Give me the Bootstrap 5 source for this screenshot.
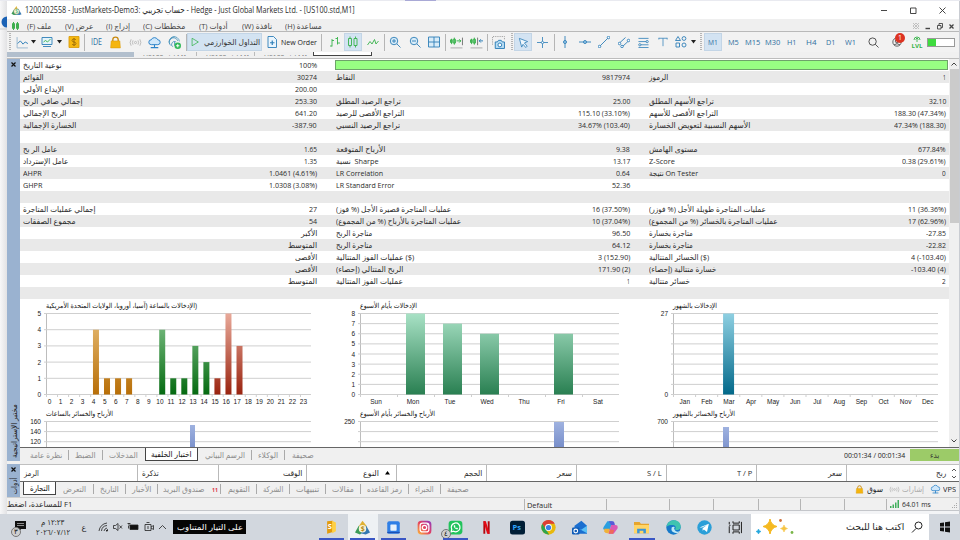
<!DOCTYPE html>
<html lang="ar">
<head>
  <meta charset="UTF-8">
  <meta name="viewport" content="width=device-width, initial-scale=1.0">
  <title>JustMarkets - Strategy Tester</title>
  <link href="https://cdn.jsdelivr.net/npm/bootstrap@5.3.3/dist/css/bootstrap.min.css" rel="stylesheet">
  <style>
    body {
      width: 960px;
      height: 540px;
      background: #f3f4f6;
      font-family: "Open Sans", "DejaVu Sans", sans-serif;
      font-size: 8px;
      line-height: 12px;
      color: #2b2b2b;
    }
    svg { display: block; flex: none; }
    .fit { display: inline-block; flex: none; white-space: nowrap; }
    .fit > span { display: inline-block; transform-origin: 0 50%; white-space: pre; }
    .backdrop { height: 1px; background: #e9eaf0; }
    .backdrop div { width: 31px; height: 1px; margin-left: 405px; background: #a9a9d6; }
    .desk { height: 513px; }
    .behind { width: 7px; background: linear-gradient(90deg, #f7f7f8, #e2e2e4); overflow: hidden; }
    .window { width: 952px; height: 510px; background: #f0f0f0; border-bottom: 1px solid #c4c6ca; }
    .window > * { flex: none; }
    .edge { width: 1px; background: #c9ccd2; }
    .titlebar { height: 18px; background: #fff; padding-left: 4px; font-size: 9px; }
    .titlebar .fit { margin-left: 3px; }
    .menubar { height: 12px; background: #efefef; color: #444; padding-top: 1px; }
    .toolbar { height: 21px; background: #f2f2f2; border-top: 1px solid #b9b9b9; }
    .tool { height: 18px; color: #2f6f9f; }
    .tool.on { background: #d3e3f2; border: 1px solid #c3d5e6; }
    .vline { width: 1px; height: 17px; background: #b5b5b5; }
    .grip { width: 2px; height: 18px; background: repeating-linear-gradient(#b5b5b5 0 1px, transparent 1px 2px); }
    .alert-dot { top: 0; right: 3px; width: 10px; height: 10px; background: #dd3322; color: #fff; font-size: 7px; line-height: 10px; }
    .level { width: 28px; height: 9px; border: 1px solid #999; background: #fff; }
    .level div { width: 8px; height: 7px; background: #3fdc3f; }
    .strip { height: 7px; font-size: 7px; color: #777; border-bottom: 1px solid #bdbdbd; }
    .strip .blue { width: 127px; height: 5px; background: #b2bfcd; }
    .strip .cut { width: 59px; height: 4px; overflow: hidden; padding-left: 9px; border-left: 1px solid #bbb; }
    .strip .cut .fit { margin-top: -6px; }
    .strip .cut.front { background: #fff; color: #333; border: 1px solid #444; border-top: 0; }
    .side { width: 13px; background: #9ab2d0; color: #222; }
    .sheet { width: 929px; background: #fff; overflow: hidden; }
    .stat { height: 12px; padding-right: 3px; padding-left: 3px; }
    .stat:nth-child(even) { background: #e9e9e9; }
    .pair { width: 294px; }
    .pair + .pair { margin-left: 18.5px; }
    .pair.last { width: 297px; margin-left: 19.5px; }
    .quality { width: 613px; height: 10px; background: #98ff83; border: 1px solid #6ea36a; margin-left: 18px; }
    .scroll { width: 10px; background: #f0f0f0; }
    .thumb { width: 9px; height: 154px; background: #cbcbcb; }
    .tabs { height: 15px; border-top: 1px solid #666; background: #f0f0f0; color: #8c8c8c; }
    .tabs.tester { height: 14px; }
    .tabs .tab { height: 10px; border-right: 1px solid #aaa; }
    .tabs .tab.open { height: 13px; background: #fff; color: #111; border: 1px solid #444; border-top: 0; align-self: flex-start; }
    .tabs .tab.plain { border-right-color: transparent; }
    .start-btn { width: 49px; height: 12px; background: #9ccb68; color: #333; font-size: 8px; }
    .cols { height: 17px; background: #fff; border-top: 1px solid #c0c0c0; }
    .cols .cell { border-right: 1px solid #b9b9b9; padding: 0 4px; height: 16px; }
    .status { height: 13px; border-top: 1px solid #cfcfcf; }
    .status .cell { height: 11px; border-left: 1px solid #b5b5b5; }
    .taskbar { height: 26px; background: #d2d7de; }
    .app { height: 26px; width: 31px; }
    .app.live::after { content: ""; position: absolute; bottom: 0; left: 3px; right: 3px; height: 2px; background: #3a56c4; }
    .app.sel::before { content: ""; position: absolute; inset: 0 0 0 1px; background: #eef1f4; }
    .app svg { position: relative; }
    .unread { left: 1px; bottom: 1px; width: 10px; height: 10px; border: 1px solid #777; background: #cfcfcf; font-size: 7px; line-height: 8px; color: #111; }
    .tip { width: 73px; height: 14px; background: #050505; color: #fff; }
    .search { width: 178px; height: 26px; background: #fff; }
  </style>
</head>
<body class="overflow-hidden">
  <div class="backdrop"><div></div></div>
  <div class="desk d-flex">
    <div class="behind">
      <svg width="7" height="513"><circle cx="7" cy="21" r="5.5" fill="#1b62b5"/><path d="M0 28h7" stroke="#ccc"/></svg>
    </div>

    <div class="window d-flex flex-column">
      <div class="titlebar d-flex align-items-center">
        <svg width="11" height="11" viewBox="0 0 24 24"><path d="M12 2 7 9l10 6z" fill="#e3b83f"/><path d="M7 9 1 19l5 3 7-1z" fill="#3c9a58"/><path d="M16 8l7 12-4 2-9-1z" fill="#3f7fb5"/><circle cx="12" cy="14" r="6" fill="#f7f3dd" stroke="#7d8f55"/><text x="9" y="18" font-size="11" fill="#4b7">$</text></svg>
        <span class="fit" data-w="330">1200202558 - JustMarkets-Demo3: حساب تجريبي - Hedge - Just Global Markets Ltd. - [US100.std,M1]</span>
        <svg class="ms-auto me-1" width="74" height="12" fill="none" stroke="#333" stroke-width=".9"><path d="M0 6.500h6M29.500 4h5.500v5.500h-5.500zM58.500 3.500l6 6m0-6l-6 6"/></svg>
      </div>

      <div class="menubar d-flex align-items-center" id="menu"></div>
      <div class="toolbar d-flex align-items-center" id="tools"></div>

      <div class="strip d-flex align-items-start">
        <div class="blue"></div>
        <div class="cut border-0" style="width:62px"><span class="fit" data-w="44">US100.std,M1</span></div>
        <div class="cut" style="width:58px"><span class="fit" data-w="44">US100.std,M1</span></div>
        <div class="cut"><span class="fit" data-w="44">US100.std,M1</span></div>
        <div class="cut front"><span class="fit" data-w="44">US100.std,M1</span></div>
      </div>

      <div class="d-flex" style="height:402px">
        <div class="side d-flex flex-column justify-content-between align-items-center">
          <svg width="13" height="12" stroke="#111" stroke-width="1.2"><path d="M4.500 3.500l4 4m0-4l-4 4"/></svg>
          <svg width="13" height="60"><text transform="translate(9.500 57) rotate(-90)" textLength="54" lengthAdjust="spacingAndGlyphs" font-size="8" fill="#222">مختبر الإستراتيجية</text></svg>
        </div>
        <div class="flex-grow-1">
          <div class="d-flex" style="height:388px">
            <div class="sheet">
              <div id="stats"></div>
              <div class="d-flex" id="charts"></div>
            </div>
            <div class="scroll d-flex flex-column align-items-center">
              <svg width="10" height="10" fill="none" stroke="#444"><path d="M2.500 6.500l2.500-2.500 2.500 2.500"/></svg>
              <div class="thumb"></div>
              <svg class="mt-auto" width="10" height="11" fill="none" stroke="#444"><path d="M2.500 3.500l2.500 2.500 2.500-2.500"/></svg>
            </div>
          </div>
          <div class="tabs tester d-flex align-items-center">
            <div class="d-flex align-items-center align-self-stretch" id="testerTabs"></div>
            <span class="fit ms-auto" data-w="61" style="color:#222;margin-right:5px">00:01:34 / 00:01:34</span>
            <div class="start-btn d-flex align-items-center justify-content-center"><span class="fit" data-w="9">بدء</span></div>
          </div>
        </div>
      </div>

      <div class="d-flex" style="height:33px;margin-top:3px">
        <div class="side d-flex flex-column align-items-center">
          <svg width="13" height="12" stroke="#111" stroke-width="1.2"><path d="M4.500 3.500l4 4m0-4l-4 4"/></svg>
          <svg width="13" height="20"><text transform="translate(9.500 18.500) rotate(-90)" textLength="17" lengthAdjust="spacingAndGlyphs" font-size="8" fill="#222">أدوات</text></svg>
        </div>
        <div class="flex-grow-1">
          <div class="cols d-flex align-items-center" id="cols"></div>
          <div class="tabs d-flex align-items-center">
            <div class="d-flex align-items-center align-self-stretch" id="toolTabs"></div>
            <div class="ms-auto d-flex align-items-center text-dark" style="padding-right:3px">
              <svg width="9" height="9" viewBox="0 0 24 24"><use href="#bag"/></svg>
              <span class="fit" data-w="16" style="margin:0 6px 0 3px">سوق</span>
              <svg width="11" height="9" viewBox="0 0 24 20"><use href="#radio"/></svg>
              <span class="fit" data-w="22" style="margin:0 6px 0 2px;color:#aaa">إشارات</span>
              <svg width="11" height="10" viewBox="0 0 24 24"><use href="#cloud"/></svg>
              <span class="fit" data-w="13" style="margin-left:2px">VPS</span>
            </div>
          </div>
        </div>
      </div>

      <div class="status d-flex align-items-center">
        <span class="fit" data-w="65" style="width:517px">للمساعدة، اضغط F1</span>
        <div class="cell" style="width:82px;padding-left:2px"><span class="fit" data-w="25">Default</span></div>
        <div class="cell" style="width:63px"></div>
        <div class="cell" style="width:44px"></div>
        <div class="cell" style="width:45px"></div>
        <div class="cell" style="width:42px"></div>
        <div class="cell" style="width:44px"></div>
        <div class="cell" style="width:42px"></div>
        <div class="cell d-flex align-items-center flex-grow-1" style="padding-left:3px">
          <svg width="10" height="8" fill="#3fae5a"><path d="M0 6h1.500v2H0zM2.500 4.500H4V8H2.500zM5 2.500h1.500V8H5zM7.500 0H9v8H7.500z"/></svg>
          <span class="fit" data-w="29" style="margin-left:2px">64.01 ms</span>
          <svg class="ms-auto align-self-end" width="8" height="8" fill="#aaa"><path d="M5 1h1v1H5zM5 3h1v1H5zM3 3h1v1H3zM5 5h1v1H5zM3 5h1v1H3zM1 5h1v1H1z"/></svg>
        </div>
      </div>
    </div>
    <div class="edge"></div>
  </div>

  <div class="taskbar d-flex align-items-center">
    <div class="position-relative" style="width:35px;padding-left:13px">
      <svg width="14" height="15" viewBox="0 0 14 15"><path d="M2 1h11v8H8l-2 3V9H2z" fill="#111"/><path d="M4 3.500h7M4 5.500h7" stroke="#aaa" stroke-width=".8"/></svg>
      <span class="unread position-absolute rounded-circle text-center" style="left:11px;bottom:-2px">٣</span>
    </div>
    <div class="d-flex flex-column align-items-center" style="width:35px;line-height:10px">
      <span class="fit" data-w="23" dir="rtl">١٢:٢٣ م</span>
      <span class="fit" data-w="34">٢٠٢٦/٠٧/١٢</span>
    </div>
    <span class="text-center" style="width:28px">ع</span>
    <svg width="70" height="12" fill="none" stroke="#222" stroke-width=".8">
      <path d="M1 10a9 9 0 0 1 8-8M3.500 10a6 6 0 0 1 5.500-5.500M6 10a4 4 0 0 1 3-3"/><path d="M8 10l1.500-1.500V10z" fill="#222"/>
      <path d="M15.500 4.500h2l2.500-2v7l-2.500-2h-2zM21.500 4.500l2.500 3m0-3l-2.500 3"/>
      <path d="M32 4h8v4.500h-8z" fill="#111"/><path d="M30.500 5v2.500M29.500 2.500h3M31 2v3"/>
      <path d="M47 3.500h6v6h-6zM53 6l2.500-1.500v4L53 7M48.500 1.500h3M50 5v3"/>
      <path d="M61 8l3.500-3.500L68 8"/>
    </svg>
    <div style="width:5px"></div>
    <div class="tip d-flex align-items-center justify-content-center"><span class="fit" data-w="66">على التيار المتناوب</span></div>
    <div style="width:69.500px"></div>
    <div class="d-flex" id="apps"></div>
    <div class="search d-flex align-items-center">
      <svg width="46" height="20" style="margin-left:3px"><path d="M16 2q1 6 7 7.500-6 1.500-7 7.500-1-6-7-7.500 6-1.500 7-7.500z" fill="#f5b921" stroke="#f5b921"/><path d="M30 8q.5 3 3.500 3.500-3 .5-3.500 3.500-.5-3-3.500-3.500 3-.5 3.500-3.500z" fill="#f6c443" stroke="#f6c443" stroke-width=".6"/><path d="M4.500 12q.4 2 2.500 2.500-2.100.5-2.500 2.500-.4-2-2.500-2.500 2.100-.5 2.500-2.500z" fill="#25a7dd" stroke="#25a7dd" stroke-width=".6"/><circle cx="26.500" cy="3.500" r="1.400" fill="#d0703a"/><circle cx="38" cy="15.500" r="1.400" fill="#7ab648"/></svg>
      <span class="fit" data-w="58" style="margin-left:46px;font-size:9px">اكتب هنا للبحث</span>
      <svg width="13" height="13" style="margin-left:7px" fill="none" stroke="#222"><circle cx="7.500" cy="4.500" r="3.500"/><path d="M5 7.500l-4 4"/></svg>
    </div>
    <svg width="31" height="12" fill="#111"><path d="M11 2l4-.6V5.500h-4zM16 1.200l5-.7v5h-5zM11 6.500h4v4l-4-.6zM16 6.500h5v5l-5-.7z"/></svg>
  </div>

  <svg width="0" height="0" class="position-absolute">
    <symbol id="bag" viewBox="0 0 24 24"><path d="M7 10V7a5 5 0 0 1 10 0v3" fill="none" stroke="#c98a10" stroke-width="2.500"/><path d="M4 9h16l1 13H3z" fill="#f5b50e" stroke="#d79a0b"/></symbol>
    <symbol id="radio" viewBox="0 0 24 20"><g fill="none" stroke="#b5b5b5" stroke-width="1.600"><circle cx="12" cy="10" r="2"/><path d="M7.500 6q-2.500 4 0 8M16.500 6q2.500 4 0 8M4 4q-4 6 0 12M20 4q4 6 0 12"/></g></symbol>
    <symbol id="cloud" viewBox="0 0 24 24"><path d="M6 16a4.500 4.500 0 0 1 0-9 6.500 6.500 0 0 1 12 0 4.500 4.500 0 0 1 0 9z" fill="#cfe7fa" stroke="#2a82c9" stroke-width="1.800"/><path d="M12 16v6M5 21.500h14" stroke="#2a82c9" stroke-width="2"/></symbol>
  </svg>

  <script>
    const $ = id => document.getElementById(id);
    const fit = (text, w, dir = 'rtl') => `<span class="fit" data-w="${w}" dir="${dir}">${text}</span>`;

    // menu: label, text width, left gap
    const menu = [['ملف (F)', 24, 6], ['عرض (V)', 28, 14], ['إدراج (I)', 24, 13], ['مخططات (C)', 42, 13],
      ['أدوات (T)', 29, 14], ['نافذة (W)', 30, 14], ['مساعدة (H)', 37, 13]];
    $('menu').innerHTML = `
      <svg width="12" height="10" style="margin-left:2px" fill="none" stroke="#3faf4f"><path d="M3.500 2.500h2v5h-2zM7.500 2.500h2v5h-2zM4.500 1v8M8.500 1v8"/></svg>` +
      menu.map(m => `<span style="margin-left:${m[2]}px;line-height:12px">${fit(m[0], m[1])}</span>`).join('') + `
      <svg class="ms-auto" width="48" height="12" fill="none" stroke="#444" stroke-width=".9" style="margin-right:1px">
        <path d="M3 3l6 6m0-6l-6 6M3 6l3-3 3 3-3 3z" stroke="#bbb"/><path d="M15.500 8.500h4.500" stroke-width="1.400"/>
        <path d="M27.500 5.500h3.500v3.500h-3.500zM29 5.500v-2h3.500V7.500H31"/><path d="M39.500 4.500l4 4m0-4l-4 4" stroke-width="1.300"/></svg>`;

    const B = '#2f7fb8', G = '#35b24a';
    const icons = {
      line: `<path d="M2 2v20h20" stroke="#9bb8d0"/><path d="M3 14l5-5 5 6 4-4 5 3" stroke="${B}"/>`,
      screen: `<path d="M2 3h20v14H2z" fill="#e3f3fa" stroke="${B}"/><path d="M5 12l4-3 4 3 6-6" stroke="${G}"/><path d="M4 21h16" stroke="${B}"/>`,
      dollar: `<path d="M2 1h20v22H2z" fill="#f6b80f" stroke="#d99d10"/><path d="M16 8c-1-3-8-3-8 1s8 2 8 6-7 4-8 1M12 4v16" stroke="#8a5d08" stroke-width="1.500"/>`,
      finger: `<g stroke="#4b95bd" stroke-width="1.500"><path d="M3 15a9.500 9.500 0 1 1 18-5M6 18a8 8 0 1 1 12-9M9 20a5 5 0 1 1 6-9M12 11v7M2 10q2-8 10-9"/></g><circle cx="18" cy="18" r="6" fill="#33b95b" stroke="none"/><path d="M18 15v6M15 18h6" stroke="#fff"/>`,
      play: `<path d="M5 3l15 9-15 9z" stroke="${G}"/>`,
      order: `<path d="M4 1h11l6 6v16H4z" fill="#eaf5fd" stroke="${B}"/><path d="M12.500 9v9M8 13.500h9" stroke="${B}" stroke-width="2.400"/>`,
      bars: `<path d="M6 6v15M6 20H2M6 9h4M17 2v15M17 5h-4M17 14h5" stroke="${G}"/>`,
      candles: `<path d="M3 5h6v14H3zM14 5h6v14h-6zM6 1v4M6 19v4M17 1v4M17 19v4" stroke="${G}"/>`,
      wave: `<path d="M1 18l5-7 4 5 5-9 3 9 5-6" stroke="${G}"/>`,
      zoomin: `<circle cx="10" cy="10" r="7.500" fill="#d9ecf8" stroke="${B}"/><path d="M16 16l7 7M6 10h8M10 6v8" stroke="${B}"/>`,
      zoomout: `<circle cx="10" cy="10" r="7.500" fill="#d9ecf8" stroke="${B}"/><path d="M16 16l7 7M6 10h8" stroke="${B}"/>`,
      tiles: `<path d="M1 2h22v20H1zM12 2v20M1 12h22" fill="#d9ecf8" stroke="${B}"/>`,
      shiftr: `<path d="M3 5v10M8 3v13M6 6h4v7H6zM1 7h3v5H1z" stroke="${G}"/><path d="M12 9h8m-3-3l3 3-3 3" stroke="${G}"/><path d="M23 3v14" stroke="#777"/><path d="M1 22h22" stroke="#aaa"/>`,
      shiftl: `<path d="M3 5v10M8 3v13M6 6h4v7H6zM1 7h3v5H1z" stroke="${G}"/><path d="M14 3v14" stroke="#777"/><path d="M24 9h-7m3-3l-3 3 3 3" stroke="${B}"/><path d="M1 22h22" stroke="#aaa"/>`,
      camera: `<path d="M1 16V1h22v6" stroke="#999" stroke-dasharray="2 2"/><path d="M6 11h4l2-3h5l2 3h4v12H6z" fill="#b9def5" stroke="${B}"/><circle cx="14.500" cy="16.500" r="3.500" fill="#fff" stroke="${B}"/>`,
      cursor: `<path d="M3 3l18 7-7 3 6 7-3 3-6-7-3 6z" stroke="${B}" fill="#eef6fc"/>`,
      cross: `<path d="M12 0v24M0 12h24" stroke="${B}"/><circle cx="12" cy="12" r="2.500" fill="#fff" stroke="${B}"/>`,
      vert: `<path d="M12 0v24" stroke="${B}"/><circle cx="12" cy="12" r="3" fill="#9cc9e8" stroke="${B}"/>`,
      horz: `<path d="M0 12h24" stroke="${B}"/><circle cx="12" cy="12" r="3" fill="#9cc9e8" stroke="${B}"/>`,
      trend: `<path d="M4 20L20 4" stroke="${B}"/><circle cx="3" cy="21" r="2.500" fill="#fff" stroke="${B}"/><circle cx="21" cy="3" r="2.500" fill="#fff" stroke="${B}"/>`,
      channel: `<path d="M3 14L15 3M8 22L22 9" stroke="${B}"/><circle cx="3" cy="15" r="2.500" fill="#fff" stroke="${B}"/><circle cx="8" cy="21" r="2.500" fill="#fff" stroke="${B}"/><circle cx="21" cy="9" r="2.500" fill="#fff" stroke="${B}"/>`,
      fibo: `<path d="M1 3h22M1 10h17M6 17h17M1 23h22" stroke="${B}"/><circle cx="20" cy="10" r="2.500" stroke="${B}"/><circle cx="4" cy="17" r="2.500" stroke="${B}"/>`,
      tee: `<path d="M2 3h20M12 3v19M2 2v4M22 2v4" stroke="${B}"/>`,
      shapes: `<path d="M6 1l5 8H1zM2 14h7v8H2z" stroke="${B}"/><circle cx="18" cy="5" r="3.800" stroke="${B}"/><circle cx="18" cy="18" r="4" stroke="${B}"/>`,
      find: `<circle cx="10" cy="10" r="8" stroke="#333"/><path d="M16 16l7 7" stroke="#333"/>`,
      user: `<circle cx="12" cy="12" r="10" stroke="#333"/><circle cx="12" cy="10" r="4" stroke="#333"/><path d="M5 19q7-6 14 0" stroke="#333"/>`,
      lvl: `<path d="M6 8a6 6 0 0 1 12 0M12 12V4m-3 3l3-3 3 3" stroke="${G}"/><text x="1" y="23" font-size="11" font-weight="bold" fill="${G}" textLength="22" lengthAdjust="spacingAndGlyphs" stroke="none">LVL</text>`
    };
    const svg = (name, size = 12) => `<svg width="${size}" height="${size}" viewBox="0 0 24 24" fill="none" stroke-width="1.800">${icons[name]}</svg>`;
    const use = name => `<svg width="13" height="13" viewBox="0 0 24 24"><use href="#${name}"/></svg>`;
    const caret = '<svg width="5" height="4" fill="#222"><path d="M0 0h5L2.500 3.500z"/></svg>';
    const sep = '<div class="vline"></div>', grip = '<div class="grip"></div>';

    // toolbar: content, slot width, pressed
    const tools = [[grip, 5], ['', 3], [svg('line', 13), 14], [caret, 8], ['', 2], [svg('screen'), 16], [caret, 8],
      [svg('dollar'), 21], [sep, 1], [`<span style="font-size:9px">${fit('IDE', 11)}</span>`, 22], [use('bag'), 17], [use('radio'), 22],
      [use('cloud'), 17], [svg('finger', 13), 22], [sep, 2],
      [svg('play', 10) + '<span style="margin-left:4px;color:#333">' + fit('التداول الخوارزمي', 56) + '</span>', 75, 1],
      [svg('order', 12), 19], ['<span style="color:#222">' + fit('New Order', 36) + '</span>', 36], [sep, 9],
      [svg('bars'), 18], [svg('candles'), 18, 1], [svg('wave'), 21], [sep, 2], [svg('zoomin'), 20], [svg('zoomout'), 19],
      [svg('tiles'), 20], [sep, 3], [svg('shiftr', 13), 19], [svg('shiftl', 13), 20], [sep, 2], [svg('camera', 13), 21], [grip, 5],
      [svg('cursor', 11), 18, 1], [svg('cross', 11), 21], [sep, 2], [svg('vert'), 20], [svg('horz'), 19], [svg('trend'), 20],
      [svg('channel'), 19], [svg('fibo', 11), 20], [svg('tee', 10), 19], [svg('shapes'), 18], [caret, 7], [grip, 7],
      [fit('M1', 10), 18, 1], ['', 1], [fit('M5', 11), 20], [fit('M15', 15), 19], [fit('M30', 15), 20], [fit('H1', 9), 19],
      [fit('H4', 10), 20], [fit('D1', 9), 19], [fit('W1', 11), 20], [svg('find', 11), 26],
      [svg('user', 10) + '<span class="alert-dot position-absolute rounded-circle text-center">1</span>', 22],
      [svg('lvl', 12), 18], ['<div class="level"><div></div></div>', 30]];
    $('tools').innerHTML = tools.map(([html, w, on]) =>
      `<div class="tool ${on ? 'on' : ''} d-flex align-items-center justify-content-center position-relative flex-shrink-0" style="width:${w}px">${html}</div>`).join('');

    // report rows: label, width, value, width for each of three columns
    const stats = [
      ['نوعية التاريخ', 39, '100%', 18],
      ['القوائم', 21, '30274', 20, 'النقاط', 19, '9817974', 28, 'الرموز', 19, '1', 3],
      ['الإيداع الأولي', 41, '200.00', 22],
      ['إجمالي صافي الربح', 60, '253.30', 22, 'تراجع الرصيد المطلق', 65, '25.00', 17, 'تراجع الأسهم المطلق', 65, '32.10', 17],
      ['الربح الإجمالي', 43, '641.20', 22, 'التراجع الأقصى للرصيد', 68, '115.10 (33.10%)', 52, 'التراجع الأقصى للأسهم', 69, '188.30 (47.34%)', 52],
      ['الخسارة الإجمالية', 53, '-387.90', 25, 'تراجع الرصيد النسبي', 64, '34.67% (103.40)', 52, 'الأسهم النسبية لتعويض الخسارة', 101, '47.34% (188.30)', 52],
      [],
      ['عامل الر بح', 34, '1.65', 13, 'الأرباح المتوقعة', 49, '9.38', 14, 'مستوى الهامش', 49, '677.84%', 28],
      ['عامل الإسترداد', 45, '1.35', 13, 'Sharpe  نسبة', 43, '13.17', 17, 'Z-Score', 26, '0.38 (29.61%)', 44],
      ['AHPR', 19, '1.0461 (4.61%)', 48, 'LR Correlation', 47, '0.64', 14, 'On Tester نتيجة', 49, '0', 4],
      ['GHPR', 19, '1.0308 (3.08%)', 48, 'LR Standard Error', 58, '52.36', 18],
      [],
      ['إجمالي عمليات المتاجرة', 73, '27', 8, 'عمليات المتاجرة قصيرة الأجل (% فوز)', 115, '16 (37.50%)', 38, 'عمليات المتاجرة طويلة الأجل (% فوزر)', 117, '11 (36.36%)', 38],
      ['مجموع الصفقات', 53, '54', 8, 'عمليات المتاجرة بالأرباح (% من المجموع)', 125, '10 (37.04%)', 38, 'عمليات المتاجرة بالخسائر (% من المجموع)', 129, '17 (62.96%)', 38],
      ['', 0, 'الأكبر', 16, 'متاجرة الربح', 36, '96.50', 18, 'متاجرة بخسارة', 44, '-27.85', 20],
      ['', 0, 'المتوسط', 29, 'متاجرة الربح', 36, '64.12', 18, 'متاجرة بخسارة', 44, '-22.82', 20],
      ['', 0, 'الأقصى', 22, '($) عمليات الفوز المتتالية', 78, '3 (152.90)', 32, '($) الخسائر المتتالية', 60, '4 (-103.40)', 35],
      ['', 0, 'الأقصى', 22, 'الربح المتتالي (إحصاء)', 67, '171.90 (2)', 32, 'خسارة متتالية (إحصاء)', 67, '-103.40 (4)', 35],
      ['', 0, 'المتوسط', 29, 'عمليات الفوز المتتالية', 67, '1', 3, 'خسائر متتالية', 41, '2', 4],
      []
    ];
    $('stats').innerHTML = stats.map((r, n) => {
      let row = '';
      for (let c = 0; c < (n ? 3 : 1); c++) {
        const [label = '', lw = 0, val = '', vw = 0] = r.slice(c * 4, c * 4 + 4);
        row += `<div class="pair ${c == 2 ? 'last' : ''} d-flex justify-content-between flex-shrink-0">${label ? fit(label, lw) : '<span></span>'}${val ? fit(val, vw, 'ltr') : ''}</div>`;
      }
      return `<div class="stat d-flex align-items-center">${row}${n ? '' : '<div class="quality flex-shrink-0"></div>'}</div>`;
    }).join('');

    const days = ['Sun', 'Mon', 'Tue', 'Wed', 'Thu', 'Fri', 'Sat'];
    const months = ['Jan', 'Feb', 'Mar', 'Apr', 'May', 'Jun', 'Jul', 'Aug', 'Sep', 'Oct', 'Nov', 'Dec'];
    const hours = [...Array(24).keys()];
    const charts = [
      { w: 303, x: 26, len: 265, title: '\u2067الإدخالات بالساعة (آسيا، أوروبا، الولايات المتحدة الأمريكية\u2069)', tw: 151, steps: 5, max: 5, ticks: [5, 4, 3, 2, 1, 0], cats: hours,
        off: 2.8, bw: 6, lab: 3.5, bars: { 4: [4, 'o'], 5: [1, 'o'], 6: [1, 'o'], 7: [1, 'o'], 10: [4, 'g'], 11: [1, 'g'], 12: [1, 'g'], 13: [3, 'g'], 14: [2, 'g'], 15: [1, 'r'], 16: [5, 'r'], 17: [3, 'r'] },
        title2: 'الأرباح والخسائر بالساعات', tw2: 67, ticks2: [160, 140, 120], bar2: [144, 5, 126] },
      { w: 310, x: 37, len: 259, title: 'الإدخالات بأيام الأسبوع', tw: 57, steps: 8, max: 8, ticks: [8, 7, 6, 5, 4, 3, 2, 1, 0], cats: days,
        off: 9, bw: 19, lab: 16, bars: { 1: [8, 'm'], 2: [7, 'm'], 3: [6, 'm'], 5: [6, 'm'] },
        title2: 'الأرباح والخسائر بأيام الأسبوع', tw2: 75, ticks2: [250], bar2: [194, 10, 123] },
      { w: 316, x: 40, len: 265, title: 'الإدخالات بالشهور', tw: 44, steps: 8, max: 27, ticks: [27, '', '', '', '', '', '', '', 0], cats: months,
        off: 5.9, bw: 11, lab: 11.8, bars: { 2: [27, 'b'] },
        title2: 'الأرباح والخسائر بالشهور', tw2: 62, ticks2: [700], bar2: [50, 6, 128] }
    ];
    const fills = { o: ['#e8be78', '#b86f08'], g: ['#86c58e', '#066b12'], r: ['#e9aa9a', '#9a2410'], m: ['#a9e2c6', '#2a8052'], b: ['#8fd0e2', '#03698a'] };
    const defs = Object.entries(fills).map(([k, c]) =>
      `<linearGradient id="f-${k}" gradientUnits="userSpaceOnUse" x1="0" y1="14" x2="0" y2="95"><stop stop-color="${c[0]}"/><stop offset="1" stop-color="${c[1]}"/></linearGradient>`).join('');

    $('charts').innerHTML = charts.map((c, n) => {
      const top = 14.5, h = 81, step = c.len / c.cats.length;
      let s = '';
      for (let i = 0; i <= c.steps; i++) {
        const y = top + h * i / c.steps;
        s += `<path d="M${c.x - 2} ${y}h${c.len + 2}" stroke="#cfcfcf"/>`;
        s += `<text x="${c.x - 5}" y="${y + 2.5}" text-anchor="end">${c.ticks[i]}</text>`;
      }
      for (let i = 0; i < 3; i++) {
        const y = 122.5 + i * 10.1;
        s += `<path d="M${c.x - 2} ${y}h${c.len + 2}" stroke="#cfcfcf"/>`;
        if (c.ticks2[i]) s += `<text x="${c.x - 5}" y="${y + 2.5}" text-anchor="end">${c.ticks2[i]}</text>`;
      }
      c.cats.forEach((name, i) => {
        const x = c.x + i * step;
        s += `<path d="M${x + .5} 95v3" stroke="#cfcfcf"/><text x="${x + c.lab}" y="105" text-anchor="middle">${name}</text>`;
        if (c.bars[i]) {
          const bh = h * c.bars[i][0] / c.max;
          s += `<rect x="${x + c.off}" y="${top + h - bh}" width="${c.bw}" height="${bh}" fill="url(#f-${c.bars[i][1]})"/>`;
        }
      });
      const [bx, bw, by] = c.bar2;
      return `<svg width="${c.w}" height="149" font-family="Liberation Sans, DejaVu Sans, sans-serif" font-size="6.500" fill="#222">
        <defs>${n ? '' : defs}<linearGradient id="f-p${n}" x1="0" y1="0" x2="0" y2="1"><stop stop-color="#9fb2e0"/><stop offset="1" stop-color="#7188c6"/></linearGradient></defs>
        <path d="M${c.x + .5} 14v84M${c.x + .5} 122v27" stroke="#bdbdbd"/>${s}
        <rect x="${c.x + bx}" y="${by}" width="${bw}" height="30" fill="url(#f-p${n})"/>
        <text x="${c.x}" y="9" font-size="7" textLength="${c.tw}" lengthAdjust="spacingAndGlyphs" fill="#111">${c.title}</text>
        <text x="${c.x}" y="117" font-size="7" textLength="${c.tw2}" lengthAdjust="spacingAndGlyphs" fill="#111">${c.title2}</text></svg>`;
    }).join('');

    // tabs: label, text width, slot width, state
    const tabs = list => list.map(([t, tw, w, cls = '']) =>
      `<div class="tab ${cls} d-flex align-items-center justify-content-center flex-shrink-0" style="width:${w}px">${t ? fit(t, tw) : ''}</div>`).join('');
    $('testerTabs').innerHTML = tabs([['', 0, 3, 'plain'], ['نظرة عامة', 32, 46], ['الضبط', 21, 34], ['المدخلات', 29, 42, 'plain'],
      ['اختبار الخلفية', 41, 53, 'open'], ['الرسم البياني', 40, 54], ['الوكلاء', 20, 33], ['صحيفة', 22, 36, 'plain']]);
    $('toolTabs').innerHTML = tabs([['', 0, 3, 'plain'], ['التجارة', 20, 33, 'open'], ['التعرض', 23, 38], ['التاريخ', 19, 32],
      ['الأخبار', 19, 32], ['صندوق البريد', 41, 51, 'plain'], ['<b class="text-danger" style="font-size:6px">11</b>', 6, 12], ['التقويم', 22, 36], ['الشركة', 20, 33],
      ['تنبيهات', 23, 36], ['مقالات', 22, 35], ['رمز القاعده', 35, 48], ['الخبراء', 19, 32], ['صحيفة', 22, 35, 'plain']]);

    const cols = [['الرمز', 15, 118, 'start'], ['تذكرة', 17, 81, 'start'], ['الوقت', 19, 88, 'end'], ['النوع', 16, 90, 'mid'], ['الحجم', 18, 90, 'end'],
      ['سعر', 15, 90, 'end'], ['S / L', 15, 90, 'end'], ['T / P', 15, 90, 'end'], ['سعر', 14, 90, 'end'], ['ربح', 10, 103, 'end']];
    $('cols').innerHTML = cols.map(([t, tw, w, at], i) =>
      `<div class="cell d-flex align-items-center flex-shrink-0 justify-content-${at == 'mid' ? 'end' : at} ${i == 9 ? 'border-0' : ''}" style="width:${w}px">${fit(t, tw, 'ltr')}${
        at == 'mid' ? '<svg width="5" height="4" style="margin:0 2px 0 6px"><path d="M0 3.500h5L2.500 0z"/></svg>' : ''}</div>`).join('') +
      '<svg width="9" height="16" fill="none" stroke="#555"><path d="M2 6l2-2 2 2M2 11l2 2 2-2"/></svg>';

    const apps = [
      ['<path d="M5 2l9-1v18l-9 3z" fill="#e39b0b"/><path d="M13 1l6 3v14l-6 3z" fill="#ffd044"/><text x="6" y="15" font-size="12" font-weight="bold" fill="#fff">S</text>', 'live'],
      ['<path d="M12 1L6 10l6 3 7-3z" fill="#e0b134"/><path d="M6 9L0 20l8 3 6-5z" fill="#3c9a58"/><path d="M18 9l6 11-7 3-8-2z" fill="#3479b2"/><circle cx="12" cy="14" r="6" fill="#f7f3d5"/><text x="9" y="18" font-size="11" font-weight="bold" fill="#b58b19">$</text>', 'live sel'],
      ['<rect x="2" y="2" width="20" height="20" rx="3" fill="#2f7fe6"/><rect x="7" y="7" width="10" height="10" rx="1" fill="#e8f1fb"/><path d="M2 20h20" stroke="#1c4fb3" stroke-width="2"/>', 'live'],
      ['<rect x="1" y="1" width="22" height="22" rx="6" fill="url(#insta)"/><g fill="none" stroke="#fff" stroke-width="2"><rect x="5" y="5" width="14" height="14" rx="4"/><circle cx="12" cy="12" r="3.500"/></g><circle cx="16.500" cy="7.500" r="1" fill="#fff"/>', ''],
      ['<rect x="1" y="1" width="22" height="22" rx="5" fill="#22c35c"/><path d="M5 19l1-4a7 7 0 1 1 3 3z" fill="none" stroke="#fff" stroke-width="2"/><path d="M9 9q1 5 6 6l1-2-2-1-1 1-2-2 1-1-1-2z" fill="#fff"/>', 'live', '٤'],
      ['<path d="M7 2h3v20H7zM14 2h3v20h-3z" fill="#b3070f"/><path d="M7 2h4l6 20h-4z" fill="#e50914"/>', ''],
      ['<rect x="0" y="1" width="24" height="22" rx="4" fill="#001e36"/><text x="4" y="16" font-size="12" font-weight="bold" fill="#31a8ff">Ps</text>', ''],
      ['<circle cx="12" cy="12" r="11.500" fill="#e8b90d"/><path d="M2 6a11.500 11.500 0 0 1 20 0H12L7 14z" fill="#dc3f34"/><path d="M2 6l6 9 5 8A11.500 11.500 0 0 1 2 6z" fill="#2da44e"/><circle cx="12" cy="12" r="5.500" fill="#fff"/><circle cx="12" cy="12" r="4.200" fill="#3b7fe8"/>', ''],
      ['<path d="M4 9L15 1l9 8v13H4z" fill="#1b6fd0"/><path d="M4 10l20 11V9L14 16z" fill="#5cc0f5"/><rect x="0" y="12" width="12" height="11" rx="2" fill="#0f5cb8"/><circle cx="6" cy="17.500" r="3" fill="none" stroke="#fff" stroke-width="1.800"/>', ''],
      ['<path d="M7 2h8l-4 14H4q-5 0-3-5z" fill="#2b9fe0"/><path d="M2 14h9l-2 7q-6 1-7-3z" fill="#f0b13a"/><path d="M17 22H9l4-14h7q5 0 3 6z" fill="#d95ab5"/><path d="M9 22l2-7 7 1-2 6z" fill="#ee6a5a"/><path d="M9 2h7q2 0 3 6h-6z" fill="#5a58d8"/>', ''],
      ['<path d="M0 3h9l2 3h13v15H0z" fill="#e7a52c"/><path d="M0 8h24v13H0z" fill="#ffd567"/><path d="M5 21v-7h14v7h-4v-4H9v4z" fill="#3b94d8"/>', 'live'],
      ['<circle cx="12" cy="12" r="11.500" fill="#1779c9"/><path d="M1 11C2-3 24-3 23.500 11c0 5-7 6-9 4 3-5-1-8-5-7-4 0-7 1-8.500 3z" fill="#3fc4b0"/><path d="M9 12q-2 8 8 9 3 0 5-3-6 2-8-2-2-3 0-5-3-1-5 1z" fill="#bfe8f5"/>', ''],
      ['<circle cx="12" cy="12" r="11.500" fill="#2a9fd8"/><path d="M4 12l15-6-3 13-5-4-2 2v-4l7-5-8 4z" fill="#fff"/>', ''],
      ['<g fill="none" stroke="#222" stroke-width="1.600"><path d="M2 3v4M2 10v11M2 8.500h2M8 8h10v8H8zM8 2v3h10V2M8 22v-3h10v3M21.500 3v18"/></g>', '']
    ];
    $('apps').innerHTML = apps.map(([g, cls, n]) =>
      `<div class="app ${cls} position-relative d-flex align-items-center justify-content-center flex-shrink-0" style="width:31.100px"><svg width="15" height="15" viewBox="0 0 24 24"><defs><linearGradient id="insta" x1="0" y1="1" x2="1" y2="0"><stop stop-color="#fdbb3b"/><stop offset=".5" stop-color="#e4405f"/><stop offset="1" stop-color="#8a3ac8"/></linearGradient></defs>${g}</svg>${
        n ? `<span class="unread position-absolute rounded-circle text-center">${n}</span>` : ''}</div>`).join('');

    // squeeze each label to its slot
    document.querySelectorAll('.fit').forEach(el => {
      const inner = document.createElement('span');
      inner.dir = el.getAttribute('dir') || 'ltr';
      el.dir = 'ltr';
      inner.append(...el.childNodes);
      el.append(inner);
      const w = Number(el.dataset.w);
      if (!el.style.width) el.style.width = w + 'px';
      inner.style.transform = `scaleX(${w / inner.offsetWidth})`;
    });
  </script>
  <script src="https://cdn.jsdelivr.net/npm/bootstrap@5.3.3/dist/js/bootstrap.bundle.min.js"></script>
</body>
</html>
